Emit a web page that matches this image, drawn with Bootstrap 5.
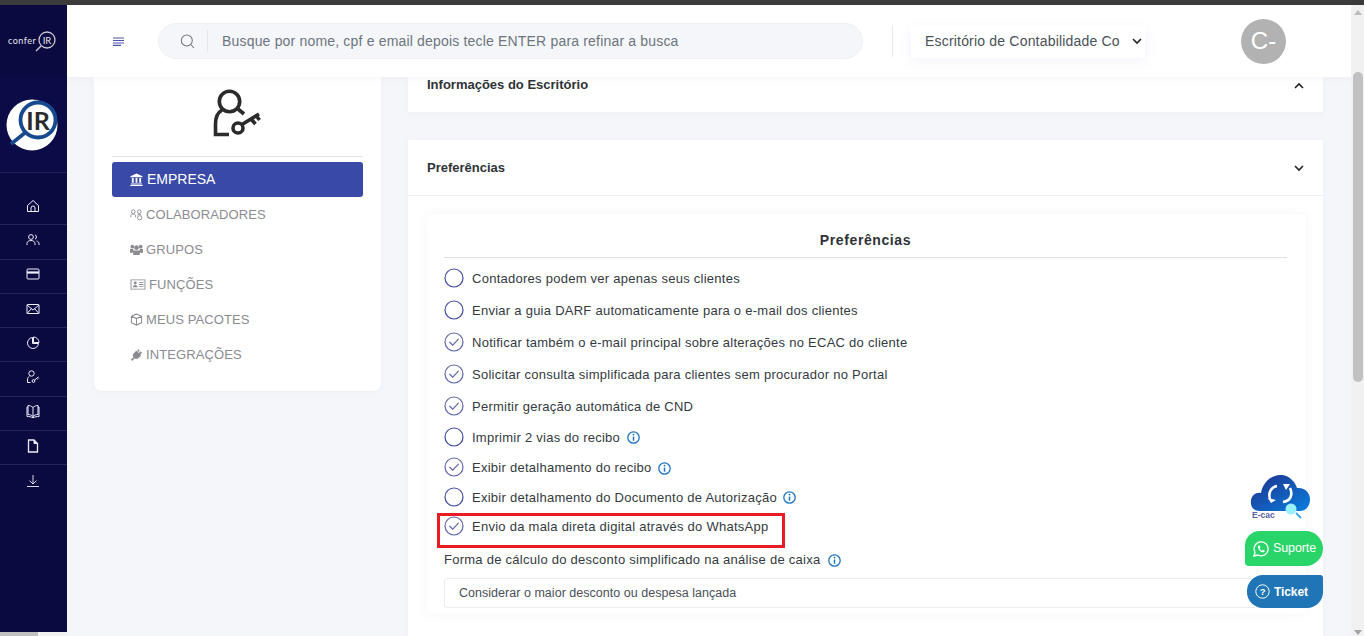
<!DOCTYPE html>
<html lang="pt-BR">
<head>
<meta charset="utf-8">
<title>Preferências</title>
<link rel="stylesheet" href="https://cdn.jsdelivr.net/npm/bootstrap@5.3.0/dist/css/bootstrap.min.css">
<style>
html,body{height:636px;overflow:hidden}
body{font-family:"Liberation Sans",Arial,sans-serif;background:#f5f6fa;color:#343a40;position:relative}
.top-strip{height:5px;background:#3b3b3b}
.app-row{height:631px}
.side-rail{width:67px;background:#0a0a40;color:#fff}
.rail-brand{height:72px;padding-right:2px}
.rail-logo{height:96px;background:#0b0b47;border-bottom:1px solid #1f1f55;padding-right:3px}
.rail-nav{padding-top:18px}
.rail-item{height:34.3px;border-bottom:1px solid #24245a;padding:0 2px 4px 0}
.rail-item:last-child{border-bottom:0}
.rail-item svg{width:14px;height:14px;fill:none;stroke:#eef;stroke-width:1}
.rail-hbar{height:4px;background:#f1f1f1}
.rail-hthumb{width:38px;height:4px;background:#c1c1c1}
.main-col{width:1284px}
.top-bar{height:72px;background:#fff;padding-left:46px;box-shadow:0 2px 8px rgba(80,90,160,.05);z-index:2}
.search-pill{width:705px;height:36px;background:#f5f6fa;border:1px solid #eef0f5;border-radius:18px;margin-left:33px;color:#6c757d;font-size:14px;letter-spacing:.18px}
.search-ico{width:49px;height:22px;border-right:1px solid #e3e5ea;padding-left:21px}
.search-pill span{padding-left:14px}
.v-rule{width:1px;height:32px;background:#e9eaee;margin-left:29px}
.office-box{width:234px;height:33px;margin-left:18px;padding-left:14px;padding-right:3px;background:#fff;box-shadow:0 4px 14px rgba(90,100,200,.07);font-size:14px;color:#495057;letter-spacing:.19px}
.avatar-dot{width:45px;height:45px;border-radius:50%;background:#b2b2b2;color:#fff;font-size:24px;margin-left:96px}
.body-area{padding-left:27px;gap:27px}
.menu-panel{width:287px;height:314px;background:#fff;border-radius:0 0 8px 8px;padding:11px 18px 0;box-shadow:0 1px 6px rgba(80,90,160,.05)}
.menu-top{height:69px;border-bottom:1px solid #e3e4e8;margin-bottom:5px}
.menu-link{height:35px;padding-left:18px;font-size:13px;color:#8b8b92;letter-spacing:.1px;gap:3px;background:transparent;border:0;border-radius:3px}
.menu-link svg{width:13px;height:13px;fill:#8b8b92}
.menu-link.is-on{background:#3949a8;color:#fff;gap:4px;font-size:14px;letter-spacing:0}
.menu-link.is-on svg{fill:#fff}
.right-col{width:915px}
.acc-one{height:35px;background:#fff;padding:0 19px;font-size:13px;line-height:16px;font-weight:700;color:#2f3338;margin-bottom:28px;box-shadow:0 2px 6px rgba(80,90,160,.04)}
.acc-two{height:600px;background:#fff;box-shadow:0 1px 6px rgba(80,90,160,.05)}
.acc-head{height:56px;padding:0 19px;border-bottom:1px solid #eceef1;font-size:13px;font-weight:700;color:#2f3338}
.chev{width:10px;height:10px;fill:none;stroke:#222;stroke-width:1.6}
.pref-card{margin:18px 17px 0 19px;padding:16px 19px 0 17px;background:#fff;box-shadow:0 0 12px rgba(80,90,160,.06);border-radius:6px;height:400px;font-size:13px;letter-spacing:.26px}
.pref-title{font-size:14px;font-weight:700;letter-spacing:.6px;color:#2f3338;height:28px;border-bottom:1px solid #dfe1e5;text-align:center;line-height:20px;margin-bottom:5px}
.pref-row{height:32px;gap:8px;color:#343a40}
.pref-row.r31{height:31px}
.pref-row.r30{height:30px}
.pref-row.r29{height:29px}
.tick{width:20px;height:20px;flex:none;fill:none;stroke:#3f4aa5;stroke-width:1.2;margin-top:-2px}
.tick.on{stroke:#5f66ad}
.info{width:13px;height:13px;flex:none;margin-left:7px}
.pref-row .info{margin-left:-1.5px}
.pref-label{height:30px;margin-top:3px;margin-bottom:3px;gap:1px}
.fake-select{height:30px;border:1px solid #eceef1;border-radius:3px;padding-left:14px;font-size:12.5px;color:#495057;letter-spacing:.03px}
.scroll-rail{width:13px;background:#f1f1f1;z-index:3}
.scroll-thumb{width:10px;height:310px;background:#c1c1c1;border-radius:5px;margin:67px 1.5px 0;display:block}
.arrow-up,.arrow-down{width:0;height:0;border-left:4px solid transparent;border-right:4px solid transparent;position:absolute;left:2.5px}
.arrow-up{top:5px;border-bottom:5px solid #bbb}
.arrow-down{bottom:1px;border-top:5px solid #a3a3a3}
.red-mark{position:absolute;left:437px;top:513px;width:348px;height:35px;border:3px solid #e81c24;z-index:4;pointer-events:none}
.ecac-float{position:absolute;left:1250px;top:473px;width:62px;height:50px;z-index:4}
.float-btn{position:absolute;z-index:4;color:#fff;font-size:12.5px;letter-spacing:-.1px;gap:4px}
.float-zap{left:1245px;top:531px;width:78px;height:35px;background:#29d468;border-radius:15px 18px 18px 4px;padding-left:8px}
.float-ticket{left:1247px;top:575px;width:76px;height:33px;background:#1f75b6;border-radius:16px 3px 16px 16px;padding-left:8px;font-weight:700;font-size:12px}
</style>
</head>
<body>
<div class="top-strip"></div>
<div class="app-row d-flex">
  <aside class="side-rail flex-shrink-0 d-flex flex-column">
    <div class="rail-brand d-flex align-items-center justify-content-center">
      <svg width="50" height="24" viewBox="0 0 50 24" aria-label="conferIR">
        <text x="0" y="15" font-family="Lato, sans-serif" font-size="9" letter-spacing=".5" fill="#e6e6ee">confer</text>
        <circle cx="39" cy="11" r="8" fill="none" stroke="#c9c9d0" stroke-width="1.3"/>
        <text x="39" y="14.500" text-anchor="middle" font-family="Lato, sans-serif" font-size="9.500" fill="#e6e6ee">IR</text>
        <path d="M33 17l-5 5" stroke="#c9c9d0" stroke-width="1.4"/>
      </svg>
    </div>
    <div class="rail-logo d-flex align-items-center justify-content-center">
      <svg width="52" height="52" viewBox="0 0 52 52" aria-label="IR">
        <circle cx="26" cy="26" r="25.500" fill="#fff"/>
        <path d="M20 33L5 45" stroke="#17498f" stroke-width="3.600"/>
        <circle cx="32" cy="21" r="17.500" fill="#fff" stroke="#17498f" stroke-width="3.800"/>
        <text x="32" y="31" text-anchor="middle" font-family="Lato, sans-serif" font-size="25" font-weight="700" fill="#2b2b2b">IR</text>
      </svg>
    </div>
    <nav class="rail-nav flex-grow-1">
      <div class="rail-item d-flex align-items-center justify-content-center"><svg viewBox="0 0 14 14"><path d="M1.500 6.500L7 1.500l5.500 5V12.500h-11zM5 12.500V9a2 2 0 0 1 4 0v3.500"/></svg></div>
      <div class="rail-item d-flex align-items-center justify-content-center"><svg viewBox="0 0 14 14"><circle cx="5" cy="4" r="2.400"/><path d="M1 12V10.500C1 8.500 3 7.500 5 7.500s4 1 4 3V12M9 1.800a2.400 2.400 0 0 1 0 4.400M10.500 8c1.500.4 2.500 1.300 2.500 2.800V12"/></svg></div>
      <div class="rail-item d-flex align-items-center justify-content-center"><svg viewBox="0 0 14 14"><rect x="1" y="2" width="12" height="10" rx="1"/><path d="M1 5.500h12" stroke-width="2.200"/></svg></div>
      <div class="rail-item d-flex align-items-center justify-content-center"><svg viewBox="0 0 14 14"><rect x="1" y="2.500" width="12" height="9" rx=".5"/><path d="M1 3l6 5 6-5M1 11.500l4.500-5M13 11.500L8.500 6.500"/></svg></div>
      <div class="rail-item d-flex align-items-center justify-content-center"><svg viewBox="0 0 14 14"><path d="M6.500 1.500A5.500 5.500 0 1 0 12.500 7.500H6.500z"/><path d="M7.500 1a5.500 5.500 0 0 1 5.500 5.500H7.500z"/></svg></div>
      <div class="rail-item d-flex align-items-center justify-content-center"><svg viewBox="0 0 14 14"><circle cx="5.500" cy="3.500" r="2.700"/><path d="M3.500 6.200C2.200 7 1.500 8.200 1.500 10v2.500h3"/><circle cx="7.500" cy="11" r="1.400"/><path d="M8.500 10L12.500 7M10.500 8.500l1 1M12 7.500l.8 1"/></svg></div>
      <div class="rail-item d-flex align-items-center justify-content-center"><svg viewBox="0 0 14 14"><path d="M7 3.500C5.500 2 3.500 1.500 2 1.500v9c1.500 0 3.500.5 5 2 1.500-1.500 3.500-2 5-2v-9c-1.500 0-3.500.5-5 2zM7 3.500v9M2 3H1v9.500c2 0 4 .3 6 1.200 2-.9 4-1.200 6-1.200V3h-1"/></svg></div>
      <div class="rail-item d-flex align-items-center justify-content-center"><svg viewBox="0 0 14 14"><path d="M2.500 1h5.500l3.500 3.500V13h-9z" stroke-width="1.300"/><path d="M8 1v3.500h3.500z" fill="#fff"/></svg></div>
      <div class="rail-item d-flex align-items-center justify-content-center"><svg viewBox="0 0 14 14"><path d="M7 1v9M3.500 6.500L7 10l3.500-3.500M1 12.500h12" stroke-width=".9"/></svg></div>
    </nav>
    <div class="rail-hbar"><div class="rail-hthumb"></div></div>
  </aside>

  <div class="main-col d-flex flex-column flex-shrink-0 overflow-hidden">
    <header class="top-bar d-flex align-items-center flex-shrink-0">
      <svg width="12" height="9" viewBox="0 0 12 9"><path d="M0 1h11M0 3.500h11M0 6h11M0 8.300h8" stroke="#4a55aa" stroke-width="1.200"/></svg>
      <div class="search-pill d-flex align-items-center">
        <div class="search-ico d-flex align-items-center"><svg width="15" height="15" viewBox="0 0 15 15" fill="none" stroke="#777" stroke-width="1.100"><circle cx="6.800" cy="6.500" r="5.500"/><path d="M10.800 10.500L14 14"/></svg></div>
        <span>Busque por nome, cpf e email depois tecle ENTER para refinar a busca</span>
      </div>
      <div class="v-rule"></div>
      <div class="office-box d-flex align-items-center justify-content-between">
        <span>Escritório de Contabilidade Co</span>
        <svg class="chev" viewBox="0 0 10 10"><path d="M1 3l4 4 4-4"/></svg>
      </div>
      <div class="avatar-dot d-flex align-items-center justify-content-center">C-</div>
    </header>

    <main class="body-area d-flex">
      <section class="menu-panel flex-shrink-0">
        <div class="menu-top d-flex justify-content-center">
          <svg width="50" height="50" viewBox="0 0 50 50" fill="none" stroke="#2b2b2b" stroke-width="3.600">
            <circle cx="16.500" cy="13.500" r="10.200"/>
            <path d="M9 22C4 25 2.500 31 2.500 36v10.500H16"/>
            <path d="M25 21l6 5"/>
            <circle cx="25" cy="40" r="5"/>
            <path d="M29 36.500L46 26M38 31l4.500 5M43 27.500l3.500 4.500"/>
          </svg>
        </div>
        <div class="menu-link is-on d-flex align-items-center"><svg viewBox="0 0 14 14"><path d="M7 .5L13.500 3.500v1H.5v-1zM2 5.500h2v5H2zM6 5.500h2v5H6zM10 5.500h2v5h-2zM1 11.300h12v1H1zM.3 13h13.400v1H.3z"/></svg><span>EMPRESA</span></div>
        <div class="menu-link d-flex align-items-center"><svg viewBox="0 0 14 14" style="fill:none;stroke:#8b8b92;stroke-width:1"><circle cx="3.500" cy="4" r="2"/><path d="M1 10V8c0-1 1-1.500 2.500-1.500S6 7 6 8v2"/><circle cx="10" cy="4" r="2"/><path d="M8 7.500c1-.8 3-.8 4 0"/><circle cx="10.500" cy="10.500" r="2.300"/></svg><span>COLABORADORES</span></div>
        <div class="menu-link d-flex align-items-center"><svg viewBox="0 0 14 14"><circle cx="2.500" cy="4" r="2"/><circle cx="11.500" cy="4" r="2"/><circle cx="7" cy="5" r="2.500"/><path d="M0 6.500h3.500v4H0zM10.500 6.500H14v4h-3.500zM3.500 8h7v5h-7z"/></svg><span>GRUPOS</span></div>
        <div class="menu-link d-flex align-items-center"><svg viewBox="0 0 16 14" style="width:16px"><path fill-rule="evenodd" d="M0 1.500h16v11H0zM1 2.500v9h14v-9z"/><circle cx="5" cy="5.500" r="1.600"/><path d="M2.500 10c0-1.500 1-2.500 2.500-2.500S7.500 8.500 7.500 10zM9 4.500h5v1H9zM9 6.500h5v1H9zM9 8.500h5v1H9z"/></svg><span>FUNÇÕES</span></div>
        <div class="menu-link d-flex align-items-center"><svg viewBox="0 0 14 14" style="fill:none;stroke:#8b8b92;stroke-width:1.100"><path d="M7 1l5.500 2.500v7L7 13l-5.500-2.500v-7zM1.500 3.500L7 6l5.500-2.500M7 6v7"/></svg><span>MEUS PACOTES</span></div>
        <div class="menu-link d-flex align-items-center"><svg viewBox="0 0 14 14"><path d="M9 1l1.500 1.500L8.500 4.500 9.500 5.500l2-2L13 5l-2 2 1 1-3 3c-1.500 1-3 1-4 0l-2.500 3L1 12.500l2.800-2.500c-1-1-1-2.500 0-4l3-3 1 1z"/></svg><span>INTEGRAÇÕES</span></div>
      </section>

      <section class="right-col flex-shrink-0">
        <div class="acc-one d-flex align-items-start justify-content-between">
          <span>Informações do Escritório</span>
          <svg class="chev mt-1" viewBox="0 0 10 10"><path d="M1 7l4-4 4 4"/></svg>
        </div>
        <div class="acc-two">
          <div class="acc-head d-flex align-items-center justify-content-between">
            <span>Preferências</span>
            <svg class="chev" viewBox="0 0 10 10"><path d="M1 3l4 4 4-4"/></svg>
          </div>
          <div class="pref-card">
            <div class="pref-title">Preferências</div>
            <div class="pref-row d-flex align-items-center"><svg class="tick" viewBox="0 0 20 20"><circle cx="10" cy="10" r="9"/></svg><span>Contadores podem ver apenas seus clientes</span></div>
            <div class="pref-row d-flex align-items-center"><svg class="tick" viewBox="0 0 20 20"><circle cx="10" cy="10" r="9"/></svg><span>Enviar a guia DARF automaticamente para o e-mail dos clientes</span></div>
            <div class="pref-row d-flex align-items-center"><svg class="tick on" viewBox="0 0 20 20"><circle cx="10" cy="10" r="9"/><path d="M5.500 10l3.200 3.200 6-6.400"/></svg><span>Notificar também o e-mail principal sobre alterações no ECAC do cliente</span></div>
            <div class="pref-row d-flex align-items-center"><svg class="tick on" viewBox="0 0 20 20"><circle cx="10" cy="10" r="9"/><path d="M5.500 10l3.200 3.200 6-6.400"/></svg><span>Solicitar consulta simplificada para clientes sem procurador no Portal</span></div>
            <div class="pref-row r31 d-flex align-items-center"><svg class="tick on" viewBox="0 0 20 20"><circle cx="10" cy="10" r="9"/><path d="M5.500 10l3.200 3.200 6-6.400"/></svg><span>Permitir geração automática de CND</span></div>
            <div class="pref-row r31 d-flex align-items-center"><svg class="tick" viewBox="0 0 20 20"><circle cx="10" cy="10" r="9"/></svg><span>Imprimir 2 vias do recibo</span><svg class="info" viewBox="0 0 13 13"><circle cx="6.500" cy="6.500" r="5.700" fill="none" stroke="#1c74c0" stroke-width="1.300"/><path d="M6.500 5.500v4.200" stroke="#1c74c0" stroke-width="1.500"/><circle cx="6.500" cy="3.600" r=".9" fill="#1c74c0"/></svg></div>
            <div class="pref-row r30 d-flex align-items-center"><svg class="tick on" viewBox="0 0 20 20"><circle cx="10" cy="10" r="9"/><path d="M5.500 10l3.200 3.200 6-6.400"/></svg><span>Exibir detalhamento do recibo</span><svg class="info" viewBox="0 0 13 13"><circle cx="6.500" cy="6.500" r="5.700" fill="none" stroke="#1c74c0" stroke-width="1.300"/><path d="M6.500 5.500v4.200" stroke="#1c74c0" stroke-width="1.500"/><circle cx="6.500" cy="3.600" r=".9" fill="#1c74c0"/></svg></div>
            <div class="pref-row r29 d-flex align-items-center"><svg class="tick" viewBox="0 0 20 20"><circle cx="10" cy="10" r="9"/></svg><span>Exibir detalhamento do Documento de Autorização</span><svg class="info" viewBox="0 0 13 13"><circle cx="6.500" cy="6.500" r="5.700" fill="none" stroke="#1c74c0" stroke-width="1.300"/><path d="M6.500 5.500v4.200" stroke="#1c74c0" stroke-width="1.500"/><circle cx="6.500" cy="3.600" r=".9" fill="#1c74c0"/></svg></div>
            <div class="pref-row r30 d-flex align-items-center"><svg class="tick on" viewBox="0 0 20 20"><circle cx="10" cy="10" r="9"/><path d="M5.500 10l3.200 3.200 6-6.400"/></svg><span>Envio da mala direta digital através do WhatsApp</span></div>
            <div class="pref-label d-flex align-items-center"><span>Forma de cálculo do desconto simplificado na análise de caixa</span><svg class="info" viewBox="0 0 13 13"><circle cx="6.500" cy="6.500" r="5.700" fill="none" stroke="#1c74c0" stroke-width="1.300"/><path d="M6.500 5.500v4.200" stroke="#1c74c0" stroke-width="1.500"/><circle cx="6.500" cy="3.600" r=".9" fill="#1c74c0"/></svg></div>
            <div class="fake-select d-flex align-items-center">Considerar o maior desconto ou despesa lançada</div>
          </div>
        </div>
      </section>
    </main>
  </div>

  <div class="scroll-rail flex-shrink-0 position-relative">
    <div class="arrow-up"></div>
    <div class="scroll-thumb"></div>
    <div class="arrow-down"></div>
  </div>
</div>

<div class="red-mark"></div>

<div class="ecac-float">
  <svg width="62" height="50" viewBox="0 0 62 50">
    <defs><linearGradient id="cloudfill" x1="0" y1="0" x2="1" y2="1"><stop offset="0" stop-color="#1f2f8a"/><stop offset="1" stop-color="#0a7fe0"/></linearGradient></defs>
    <path d="M10 38C3 38 0 33 1 27c1-5 5-8 10-7 2-11 11-19 21-18 8 1 13 7 15 13 8-1 13 5 13 11 0 7-4 12-10 12z" fill="url(#cloudfill)"/>
    <path d="M20 26c-2-6 1-12 7-13M40 15c3 6 1 13-7 14" fill="none" stroke="#fff" stroke-width="2.600"/>
    <path d="M26 27l-5 3-3-5zM33 11l3 6 4-6z" fill="#fff"/>
    <path d="M46 40l5 5" stroke="#33aaf0" stroke-width="1.800"/>
    <circle cx="41" cy="36" r="5.500" fill="#9af0ff"/>
    <text x="2" y="45" font-family="Liberation Sans, sans-serif" font-size="8.500" font-weight="700" fill="#565fa5">E-cac</text>
  </svg>
</div>
<div class="float-btn float-zap d-flex align-items-center">
  <svg width="16" height="16" viewBox="0 0 16 16"><path d="M1 15l1-3.800A7 7 0 1 1 4.800 14z" fill="none" stroke="#fff" stroke-width="1.300"/><path d="M5.500 4.500c-1 1-.8 2.500.5 4.200s3 2.800 4.300 2.600c1-.2 1.500-1 1.500-1.600L10 8.700l-1 1c-1-.4-2-1.500-2.400-2.500l.8-1-.9-1.900z" fill="#fff"/></svg>
  <span>Suporte</span>
</div>
<div class="float-btn float-ticket d-flex align-items-center">
  <svg width="15" height="15" viewBox="0 0 15 15"><circle cx="7.500" cy="7.500" r="6.700" fill="none" stroke="#fff"/><text x="7.500" y="11" text-anchor="middle" font-family="Liberation Sans, sans-serif" font-size="9.500" fill="#fff">?</text></svg>
  <span>Ticket</span>
</div>
<script src="https://cdn.jsdelivr.net/npm/bootstrap@5.3.0/dist/js/bootstrap.bundle.min.js"></script>
</body>
</html>
